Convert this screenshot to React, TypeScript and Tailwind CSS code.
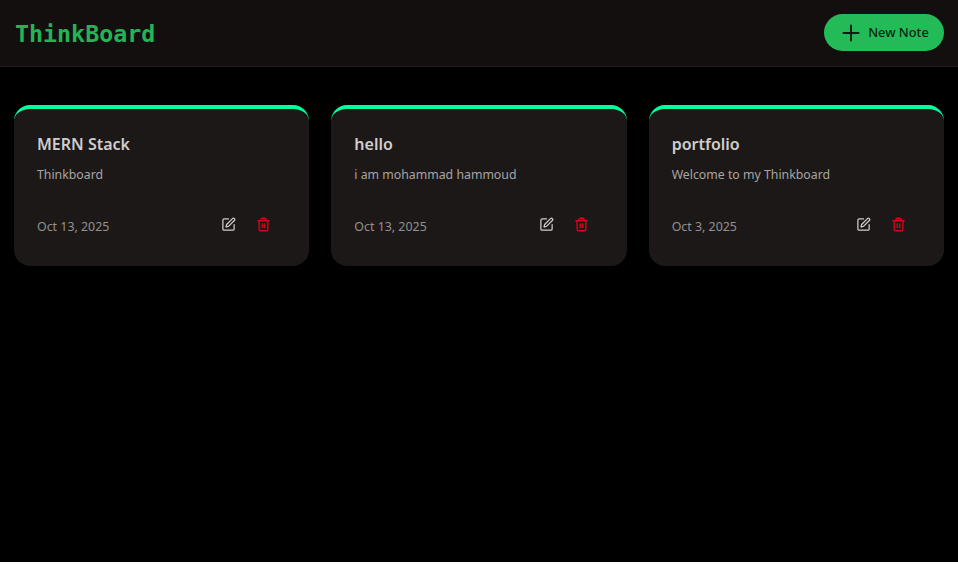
import { PenSquare, Plus, Trash2 } from "lucide-react";

const notes = [
  { title: "MERN Stack", content: "Thinkboard", date: "Oct 13, 2025" },
  { title: "hello", content: "i am mohammad hammoud", date: "Oct 13, 2025" },
  { title: "portfolio", content: "Welcome to my Thinkboard", date: "Oct 3, 2025" },
];

function NoteCard({ title, content, date }: { title: string; content: string; date: string }) {
  return (
    <div className="h-[161px] rounded-2xl border-t-4 border-[#00ff9d] bg-[#1b1817] px-[23px] pt-[21px]">
      <h3 className="text-[16px] font-semibold leading-[28px] text-[#d0cdcc]">{title}</h3>
      <p className="mt-[7px] text-[12.3px] leading-5 text-[#a8a5a4]">{content}</p>
      <div className="mt-[32px] flex items-center justify-between pr-[15px]">
        <span className="text-[12.4px] leading-5 text-[#94908f]">{date}</span>
        <div className="-mt-[5px] flex items-center gap-[20px]">
          <PenSquare className="size-[15px] text-[#d0cdcc]" />
          <Trash2 className="size-[15px] text-[#e00018]" strokeWidth={2.2} />
        </div>
      </div>
    </div>
  );
}

export default function App() {
  return (
    <div className="h-[562px] bg-black font-['Noto_Sans',sans-serif]">
      <header className="flex h-[67px] items-center justify-between border-b border-[#1f1c1b] bg-[#120f0e] pl-[15px] pr-[14px]">
        <h1 className="mt-[3px] font-['DejaVu_Sans_Mono',monospace] text-[23.3px] font-bold text-[#22b455]">ThinkBoard</h1>
        <button className="mb-px flex h-[37px] w-[120px] items-center justify-center gap-[4px] rounded-full bg-[#22bb58] pr-[1px] text-[12.8px] font-medium text-[#0a1f10]">
          <Plus className="size-[26px]" strokeWidth={1.8} />
          New Note
        </button>
      </header>
      <main className="grid grid-cols-3 gap-[22px] pl-[14px] pr-[14px] pt-[38px]">
        {notes.map((note) => (
          <NoteCard key={note.title} {...note} />
        ))}
      </main>
    </div>
  );
}
